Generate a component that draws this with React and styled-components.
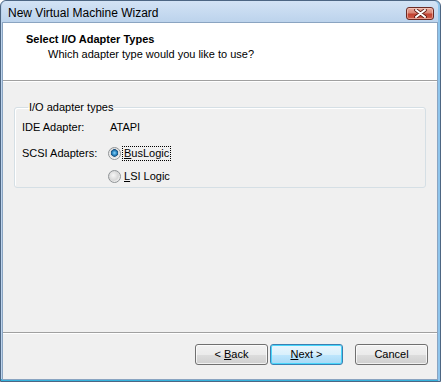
import styled, { createGlobalStyle } from "styled-components";

const GlobalStyle = createGlobalStyle`
  html, body {
    margin: 0;
    padding: 0;
    background: #ffffff;
  }
  * {
    box-sizing: border-box;
  }
`;

const App = () => {
  return (
    <>
      <GlobalStyle />
      <StyledWindow>
        <TitleBar>
          <TitleText>New Virtual Machine Wizard</TitleText>
          <CloseButton>
            <svg width="13" height="9" viewBox="0 0 13 9">
              <path
                d="M2 1 L11 8 M11 1 L2 8"
                stroke="#5a1a12"
                strokeWidth="3.6"
                strokeLinecap="round"
              />
              <path
                d="M2 1 L11 8 M11 1 L2 8"
                stroke="#ffffff"
                strokeWidth="2"
                strokeLinecap="round"
              />
            </svg>
          </CloseButton>
        </TitleBar>
        <Client>
          <Header>
            <HeaderTitle>Select I/O Adapter Types</HeaderTitle>
            <HeaderSub>Which adapter type would you like to use?</HeaderSub>
          </Header>
          <Body>
            <GroupBox>
              <legend>I/O adapter types</legend>
              <Grid>
                <Label>IDE Adapter:</Label>
                <Value>ATAPI</Value>
                <Label>SCSI Adapters:</Label>
                <RadioRow>
                  <Radio $checked />
                  <RadioText $focused>
                    <u>B</u>usLogic
                  </RadioText>
                </RadioRow>
                <span />
                <RadioRow>
                  <Radio />
                  <RadioText>
                    <u>L</u>SI Logic
                  </RadioText>
                </RadioRow>
              </Grid>
            </GroupBox>
          </Body>
          <Footer>
            <Button>
              &lt;&nbsp;<u>B</u>ack
            </Button>
            <Button $default>
              <u>N</u>ext&nbsp;&gt;
            </Button>
            <Button $gap>Cancel</Button>
          </Footer>
        </Client>
      </StyledWindow>
    </>
  );
};

const StyledWindow = styled.div`
  display: flex;
  flex-direction: column;
  width: 441px;
  height: 382px;
  padding: 0 2px 1px 1px;
  border: 1px solid #4d6683;
  border-radius: 6px 6px 0 0;
  background: linear-gradient(to right, #bcd3ec, #c9dcf1 50%, #bcd3ec);
  box-shadow: inset -2px 0 0 #8fc5ec, inset 0 -2px 0 #35b3dd;
  font-family: "Liberation Sans", Arial, sans-serif;
  font-size: 11px;
  color: #000;
`;

const TitleBar = styled.div`
  display: flex;
  align-items: center;
  justify-content: space-between;
  height: 21px;
  padding: 3px 4px 0 6px;
  background: linear-gradient(#d3e3f5, #bcd3ec);
  border-radius: 5px 5px 0 0;
`;

const TitleText = styled.span`
  font-size: 12px;
  color: #000;
`;

const CloseButton = styled.div`
  display: flex;
  align-items: center;
  justify-content: center;
  width: 28px;
  height: 13px;
  border: 1px solid #6b2a24;
  border-radius: 3px;
  background: linear-gradient(
    #e9a99c 0%,
    #d98574 45%,
    #c1402f 55%,
    #cf5e4a 100%
  );
  box-shadow: inset 0 0 0 1px rgba(255, 220, 210, 0.5);
`;

const Client = styled.div`
  flex: 1;
  display: flex;
  flex-direction: column;
  border: 1px solid #8aa4c1;
  background: #f0f0f0;
`;

const Header = styled.div`
  height: 58px;
  padding: 10px 0 0 23px;
  background: #ffffff;
  border-bottom: 1px solid #a0a0a0;
`;

const HeaderTitle = styled.div`
  font-weight: bold;
  line-height: 13px;
`;

const HeaderSub = styled.div`
  margin-top: 2px;
  padding-left: 22px;
  line-height: 13px;
`;

const Body = styled.div`
  flex: 1;
  padding: 19px 11px 0 11px;
  border-top: 1px solid #ffffff;
`;

const GroupBox = styled.fieldset`
  margin: 0;
  padding: 5px 7px 3px 7px;
  border: 1px solid #d5dfe5;
  border-radius: 3px;
  box-shadow: inset 1px 1px 0 #ffffff;
  & > legend {
    padding: 0 1px;
    margin-left: 6px;
    line-height: 13px;
  }
`;

const Grid = styled.div`
  display: grid;
  grid-template-columns: 87px auto;
  grid-template-rows: 16px 26px 23px;
  align-items: end;
`;

const Label = styled.span`
  line-height: 16px;
`;

const Value = styled.span`
  line-height: 16px;
  padding-left: 1px;
`;

const RadioRow = styled.div`
  display: flex;
  align-items: center;
  gap: 2px;
  height: 16px;
  margin-left: -1px;
`;

const Radio = styled.span`
  display: inline-block;
  width: 13px;
  height: 13px;
  border-radius: 50%;
  border: 1px solid #8f9396;
  background: ${({ $checked }) =>
    $checked
      ? "radial-gradient(circle at 50% 45%, #8fd2f6 0, #2f8fcb 2px, #19507f 3.5px, #d9d9d9 4px, #f4f4f4 5.5px)"
      : "radial-gradient(circle at 40% 40%, #f6f6f6 0, #d7d7d7 5px, #e9e9e9 6px)"};
`;

const RadioText = styled.span`
  line-height: 13px;
  padding: 0 1px;
  outline: ${({ $focused }) => ($focused ? "1px dotted #000" : "none")};
  outline-offset: 0;
`;

const Footer = styled.div`
  display: flex;
  justify-content: flex-end;
  height: 47px;
  padding: 11px 9px 0 0;
  border-top: 1px solid #a0a0a0;
  box-shadow: inset 0 1px 0 #ffffff;
`;

const Button = styled.div`
  display: flex;
  align-items: center;
  justify-content: center;
  width: 73px;
  height: 21px;
  margin-left: ${({ $gap }) => ($gap ? "12px" : "2px")};
  border: 1px solid ${({ $default }) => ($default ? "#3c7fb1" : "#707070")};
  border-radius: 3px;
  background: ${({ $default }) =>
    $default
      ? "linear-gradient(#eaf6fd 0%, #d9f0fc 50%, #bee6fd 51%, #a7d9f5 100%)"
      : "linear-gradient(#f2f2f2 0%, #ebebeb 50%, #dddddd 51%, #cfcfcf 100%)"};
  box-shadow: inset 0 0 0 1px
    ${({ $default }) => ($default ? "#48d6fb" : "rgba(255,255,255,0.7)")};
  line-height: 13px;
`;

export default App;
